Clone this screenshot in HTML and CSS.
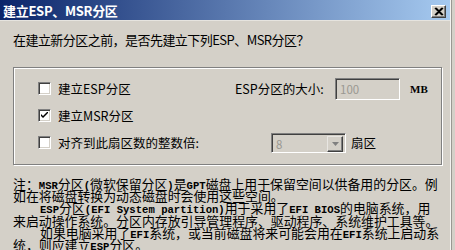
FILE: index.html
```
<!DOCTYPE html>
<html lang="zh-CN">
<head>
<meta charset="utf-8">
<link rel="stylesheet" href="styles.css">
</head>
<body>
<div class="window">
  <div class="titlebar">
    <span class="title">建立ESP、MSR分区</span>
    <span class="close"><svg width="10" height="9" viewBox="0 0 10 9"><path d="M1 1 L8 8 M2 1 L9 8 M8 1 L1 8 M9 1 L2 8" stroke="#000" stroke-width="1.4" fill="none"/></svg></span>
  </div>
  <div class="content">
    <p class="question">在建立新分区之前，是否先建立下列ESP、MSR分区？</p>
    <div class="group">
      <div class="row">
        <label class="check"><span class="box"></span><span>建立ESP分区</span></label>
        <div class="right">
          <span class="lbl">ESP分区的大小:</span>
          <span class="edit">100</span>
          <span class="unit">MB</span>
        </div>
      </div>
      <div class="row">
        <label class="check"><span class="box"><svg width="7" height="7" viewBox="0 0 7 7"><path d="M0 2 L0 4 L2 6 L7 1 L7 -1 L2 4 Z" fill="#000"/></svg></span><span>建立MSR分区</span></label>
      </div>
      <div class="row">
        <label class="check"><span class="box"></span><span>对齐到此扇区数的整数倍:</span></label>
        <div class="right">
          <span class="combo"><span class="cval">8</span><span class="cbtn"><svg width="7" height="4" viewBox="0 0 7 4"><path d="M0 0 H7 L3.5 4 Z" fill="#808080"/></svg></span></span>
          <span class="unit2">扇区</span>
        </div>
      </div>
    </div>
    <div class="note">
      <div class="line">注：<span class="lat">MSR</span>分区<span class="lat">(</span>微软保留分区<span class="lat">)</span>是<span class="lat">GPT</span>磁盘上用于保留空间以供备用的分区。例</div>
      <div class="line">如在将磁盘转换为动态磁盘时会使用这些空间。</div>
      <div class="line ind"><span class="lat">ESP</span>分区<span class="lat">(EFI System partition)</span>用于采用了<span class="lat">EFI BIOS</span>的电脑系统，用</div>
      <div class="line">来启动操作系统。分区内存放引导管理程序、驱动程序、系统维护工具等。</div>
      <div class="line ind">如果电脑采用了<span class="lat">EFI</span>系统，或当前磁盘将来可能会用在<span class="lat">EFI</span>系统上启动系</div>
      <div class="line">统，则应建立<span class="lat">ESP</span>分区。</div>
    </div>
  </div>
</div>
</body>
</html>
```
FILE: styles.css
```
* { box-sizing: border-box; }
html, body { margin: 0; padding: 0; }
body {
  width: 455px;
  height: 250px;
  overflow: hidden;
  background: #d4d0c8;
  font-family: "Noto Sans CJK SC", "Liberation Sans", sans-serif;
  color: #000;
}
.window {
  width: 451px;
  height: 250px;
  background: #d4d0c8;
  border-right: 1px solid #f4f3f0;
  box-shadow: 1px 0 0 #9a9892, 2px 0 0 #d4d0c8;
}
.titlebar {
  height: 21px;
  background: linear-gradient(to right, #0a246a, #a6caf0);
  display: flex;
  align-items: center;
  justify-content: space-between;
  padding: 0 4px 0 3px;
  border-bottom: 1px solid #e6e4df;
}
.title {
  color: #fff;
  font-weight: bold;
  font-size: 13px;
  line-height: 21px;
  letter-spacing: -0.3px;
}
.close {
  width: 15px;
  height: 13px;
  margin-top: 2px;
  background: #d4d0c8;
  border-top: 1px solid #fff;
  border-left: 1px solid #fff;
  border-right: 1px solid #404040;
  border-bottom: 1px solid #404040;
  box-shadow: inset -1px -1px 0 #808080;
  display: flex;
  align-items: center;
  justify-content: center;
}
.content {
  padding: 11px 9px 0 13px;
}
.question {
  margin: 0;
  font-size: 13px;
  line-height: 16px;
  letter-spacing: -0.55px;
}
.group {
  margin-top: 19px;
  width: 429px;
  border: 1px solid #808080;
  box-shadow: inset 1px 1px 0 #fff, 1px 1px 0 #fff;
  padding: 7px 0 8px 24px;
}
.row {
  height: 27px;
  display: flex;
  align-items: center;
  font-size: 12.5px;
}
.check {
  width: 197px;
  display: flex;
  align-items: center;
  gap: 7px;
}
.box {
  width: 13px;
  height: 13px;
  background: #fff;
  border-top: 1px solid #808080;
  border-left: 1px solid #808080;
  border-right: 1px solid #fff;
  border-bottom: 1px solid #fff;
  box-shadow: inset 1px 1px 0 #404040, inset -1px -1px 0 #d4d0c8;
  display: flex;
  align-items: center;
  justify-content: center;
}
.right {
  display: flex;
  align-items: center;
}
.lbl { width: 100px; }
.edit {
  width: 65px;
  height: 22px;
  border-top: 1px solid #808080;
  border-left: 1px solid #808080;
  border-right: 1px solid #fff;
  border-bottom: 1px solid #fff;
  box-shadow: inset 1px 1px 0 #404040, inset -1px -1px 0 #d4d0c8;
  color: #9a9892;
  font-size: 11.5px;
  line-height: 20px;
  padding-left: 4px;
}
.unit {
  margin-left: 10px;
  font-size: 11px;
  font-family: "Liberation Serif", serif;
  font-weight: bold;
}
.combo {
  margin-left: 36px;
  width: 75px;
  height: 20px;
  display: flex;
  border-top: 1px solid #808080;
  border-left: 1px solid #808080;
  border-right: 1px solid #fff;
  border-bottom: 1px solid #fff;
  box-shadow: inset 1px 1px 0 #404040, inset -1px -1px 0 #d4d0c8;
  padding: 2px;
}
.cval {
  flex: 1;
  color: #9a9892;
  font-size: 11.5px;
  line-height: 16px;
  padding-left: 2px;
}
.cbtn {
  width: 16px;
  height: 16px;
  background: #d4d0c8;
  border-top: 1px solid #e8e6e2;
  border-left: 1px solid #e8e6e2;
  border-right: 1px solid #404040;
  border-bottom: 1px solid #404040;
  box-shadow: inset -1px -1px 0 #808080;
  display: flex;
  align-items: center;
  justify-content: center;
}
.unit2 { margin-left: 5px; }
.note {
  margin-top: 13px;
  font-size: 12.9px;
  width: 440px;
}
.line {
  height: 12.2px;
  line-height: 12.2px;
  white-space: nowrap;
}
.line.ind { padding-left: 27px; }
.lat {
  font-family: "Liberation Mono", monospace;
  font-size: 10.6px;
  font-weight: bold;
}
```
